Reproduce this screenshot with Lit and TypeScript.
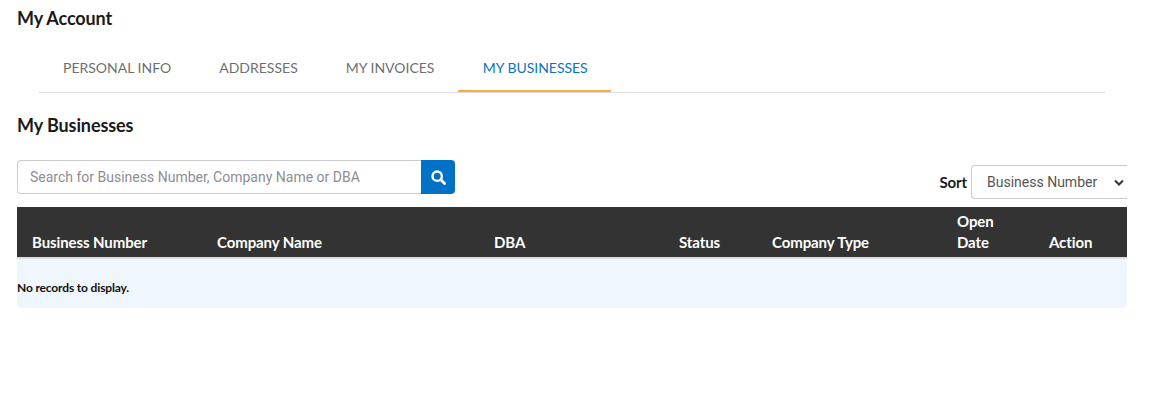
import { LitElement, html, css } from "lit";
import { customElement } from "lit/decorators.js";

@customElement("app-root")
export class AppRoot extends LitElement {
  static styles = css`
    :host { display: block; background: #fff; font-family: Lato, "Liberation Sans", sans-serif; color: #111; height: 409px; overflow: hidden; }
    .page { padding: 7px 22px 0 17px; }
    h1, h2 { margin: 0; font-size: 18px; line-height: 22px; font-weight: 700; color: #1a1a1a; letter-spacing: -0.1px; }
    .tabs { display: flex; margin: 15px 0 0 22px; width: 1066px; border-bottom: 1px solid #ddd; height: 48px; }
    .tab { box-sizing: border-box; height: 48px; padding: 0 24px 1px; display: flex; align-items: center; font-size: 14px; color: #6f6f6f; }
    .tab.active { color: #0a73c4; border-bottom: 2px solid #fbab45; padding: 1px 23.7px 0 24.3px; letter-spacing: -0.03px; }
    h2 { margin-top: 21px; }
    .controls { display: flex; justify-content: space-between; align-items: flex-end; margin-top: 24px; }
    .search { display: flex; width: 438px; height: 34px; }
    .search .input { flex: 1; box-sizing: border-box; border: 1px solid #ccc; border-right: 0; border-radius: 4px 0 0 4px; padding: 0 12px; display: flex; align-items: center; font-family: Roboto, sans-serif; font-size: 14px; color: #8d8d95; }
    .search button { width: 34px; border: 0; padding: 0; background: #0072c6; border-radius: 0 4px 4px 0; display: flex; align-items: center; justify-content: center; }
    .sort { display: flex; align-items: center; gap: 4px; margin-bottom: -5px; }
    .sort label { font-size: 15px; font-weight: 700; color: #1a1a1a; letter-spacing: -0.1px; }
    .select { box-sizing: border-box; width: 156px; height: 34px; border: 1px solid #ccc; border-right: 0; border-radius: 4px 0 0 4px; padding: 0 3px 0 15px; display: flex; align-items: center; justify-content: space-between; font-family: Roboto, sans-serif; font-size: 14px; color: #555; }
    .thead { display: grid; grid-template-columns: 185px 277px 185px 93px 185px 92px 93px; background: #333; border-bottom: 2px solid #ddd; margin-top: 13px; height: 52px; box-sizing: border-box; align-items: end; }
    .th { padding: 0 15px 4px; font-size: 15px; line-height: 21px; font-weight: 700; color: #fff; letter-spacing: -0.1px; }
    .th.open { padding-right: 20px; }
    .empty { background: #eff6fe; height: 49px; display: flex; align-items: center; font-size: 12px; font-weight: 700; color: #111; letter-spacing: -0.15px; border-radius: 0 0 4px 4px; padding-top: 7px; box-sizing: border-box; }
  `;

  render() {
    const tabs = ["PERSONAL INFO", "ADDRESSES", "MY INVOICES", "MY BUSINESSES"];
    const cols = ["Business Number", "Company Name", "DBA", "Status", "Company Type", "Open Date", "Action"];
    return html`
      <div class="page">
        <h1>My Account</h1>
        <div class="tabs">
          ${tabs.map((t, i) => html`<div class="tab ${i === 3 ? "active" : ""}">${t}</div>`)}
        </div>
        <h2>My Businesses</h2>
        <div class="controls">
          <div class="search">
            <div class="input">Search for Business Number, Company Name or DBA</div>
            <button aria-label="Search">
              <svg width="15" height="15" viewBox="0 0 15 15" fill="none" stroke="#fff">
                <circle cx="6.2" cy="6.2" r="4.7" stroke-width="2.4"></circle>
                <path d="M9.8 9.8l3.8 3.8" stroke-width="2.8" stroke-linecap="round"></path>
              </svg>
            </button>
          </div>
          <div class="sort">
            <label>Sort</label>
            <div class="select">
              <span>Business Number</span>
              <svg width="10" height="7" viewBox="0 0 10 7" fill="none" stroke="#333" stroke-width="2"><path d="M1 1.5l4 4 4-4"></path></svg>
            </div>
          </div>
        </div>
        <div class="thead">
          ${cols.map((c) => html`<div class="th ${c === "Open Date" ? "open" : ""}">${c}</div>`)}
        </div>
        <div class="empty">No records to display.</div>
      </div>
    `;
  }
}
